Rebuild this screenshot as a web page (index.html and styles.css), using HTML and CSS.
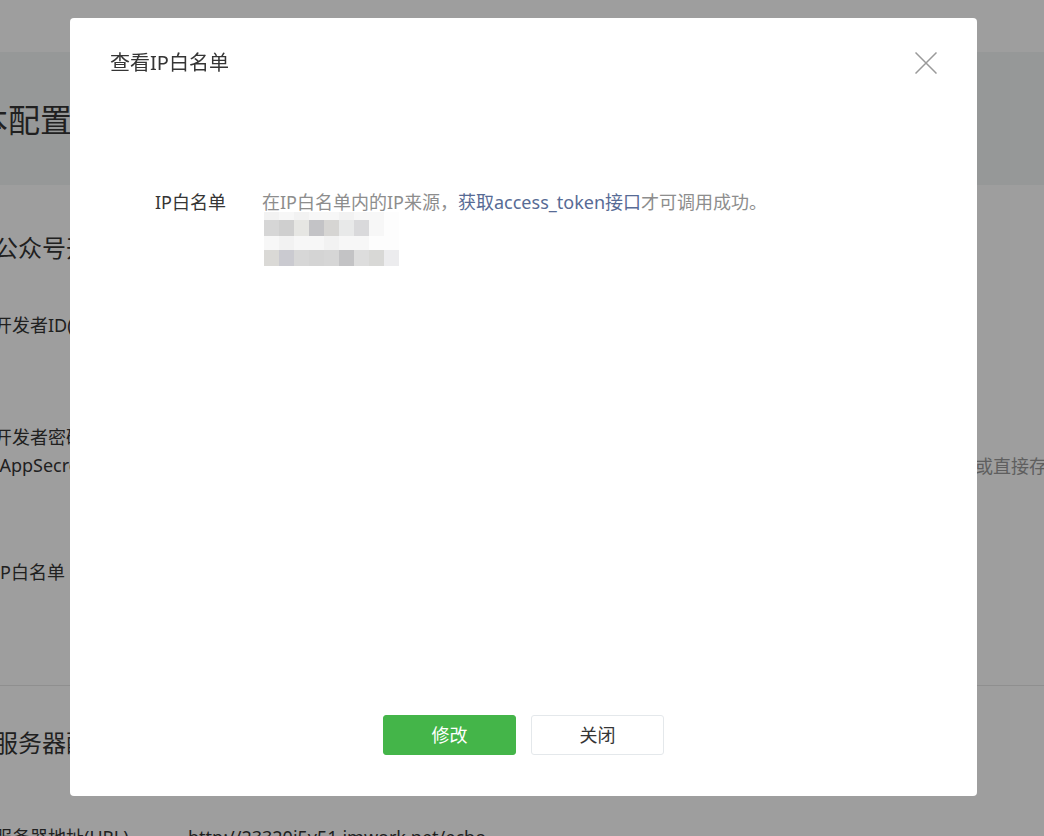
FILE: index.html
```html
<!DOCTYPE html>
<html lang="zh-CN">
<head>
<meta charset="utf-8">
<title>基本配置</title>
<link rel="stylesheet" href="styles.css">
</head>
<body>
<div class="page">
  <header class="topbar"></header>
  <section class="band">
    <div class="wrap"><h1 class="page-title">基本配置</h1></div>
  </section>
  <div class="main-outer">
    <main class="main">
      <section class="panel">
        <h2 class="panel-title">公众号开发信息</h2>
        <div class="row">
          <div class="label">开发者ID(AppID)</div>
          <div class="value">wx8d2c4f1e6a7b3c90</div>
        </div>
        <div class="row">
          <div class="label">开发者密码(AppSecret)</div>
          <div class="value value-secret">已启用</div>
          <div class="tips">或直接存储在代码中</div>
        </div>
        <div class="row row-ip">
          <div class="label">IP白名单</div>
          <div class="value">查看</div>
        </div>
      </section>
      <section class="panel panel-server">
        <h2 class="panel-title">服务器配置</h2>
        <div class="row row-url">
          <div class="label">服务器地址(URL)</div>
          <div class="value">http://23320i5y51.imwork.net/echo</div>
        </div>
      </section>
    </main>
  </div>
</div>

<div class="mask"></div>

<div class="dialog">
  <div class="dialog-hd">
    <h3 class="dialog-title">查看IP白名单</h3>
    <span class="dialog-close">
      <svg width="22" height="22" viewBox="0 0 22 22"><path d="M0.5 0.5 L21.5 21.5 M21.5 0.5 L0.5 21.5" stroke="#9a9a9a" stroke-width="1.5" fill="none"/></svg>
    </span>
  </div>
  <div class="dialog-bd">
    <div class="form-row">
      <div class="form-label">IP白名单</div>
      <div class="form-value">
        <p class="desc">在IP白名单内的IP来源，<span class="link">获取access_token接口</span>才可调用成功。</p>
        <div class="mosaic">
          <div class="mrow r1"><span class="m q2"></span><span class="m q1"></span><span class="m q2"></span><span class="m q1"></span><span class="m q1"></span><span class="m q2"></span><span class="m q1"></span><span class="m q1"></span><span class="m q0"></span></div>
          <div class="mrow r2"><span class="m a1"></span><span class="m a2"></span><span class="m a3"></span><span class="m a4"></span><span class="m a5"></span><span class="m a6"></span><span class="m a7"></span><span class="m q1"></span><span class="m q0"></span></div>
          <div class="mrow r3"><span class="m q1"></span><span class="m q2"></span><span class="m q1"></span><span class="m q1"></span><span class="m q2"></span><span class="m q1"></span><span class="m q1"></span><span class="m q0"></span><span class="m q0"></span></div>
          <div class="mrow r4"><span class="m b1"></span><span class="m b2"></span><span class="m b3"></span><span class="m b4"></span><span class="m b5"></span><span class="m b6"></span><span class="m b7"></span><span class="m b8"></span><span class="m b9"></span></div>
        </div>
      </div>
    </div>
  </div>
  <div class="dialog-ft">
    <button class="btn btn-primary">修改</button>
    <button class="btn btn-default">关闭</button>
  </div>
</div>
</body>
</html>
```

FILE: styles.css
```css
* { box-sizing: border-box; }
html, body { margin: 0; padding: 0; }
body {
  width: 1044px;
  height: 836px;
  overflow: hidden;
  background: #fff;
  font-family: "Noto Sans", "Noto Sans CJK SC", sans-serif;
  font-size: 18px;
  color: #353535;
}

/* ---------- page behind the dialog ---------- */
.topbar { height: 52px; background: #fff; }

.band {
  height: 133px;
  background: #f3f5f5;
  display: flex;
  justify-content: center;
}
.wrap { width: 1156px; flex-shrink: 0; padding-top: 48px; }
.page-title {
  margin: 0;
  font-size: 32px;
  font-weight: 400;
  line-height: 40px;
  color: #353535;
}

.main-outer { display: flex; justify-content: center; }
.main { width: 1156px; flex-shrink: 0; padding: 0 50px; }

.panel { padding: 48px 0 57px; }
.panel-title {
  margin: 0 0 6px;
  font-size: 24px;
  font-weight: 400;
  line-height: 30px;
}
.row {
  display: flex;
  padding: 42px 0;
  line-height: 28px;
}
.row-ip { padding-top: 37px; }
.label { width: 170px; margin-right: 24px; flex-shrink: 0; }
.value { flex-shrink: 0; }
.value-secret { width: 787px; }
.tips { padding-top: 30px; line-height: 26px; color: #9a9a9a; white-space: nowrap; }

.panel-server { border-top: 1px solid #e7e7e7; padding-top: 42px; }
.panel-server .panel-title { margin-bottom: 23px; }
.row-url { padding-top: 42px; }

/* ---------- mask & dialog ---------- */
.mask {
  position: fixed;
  inset: 0;
  background: rgba(0, 0, 0, 0.38);
}
.dialog {
  position: fixed;
  left: 70px;
  top: 18px;
  width: 907px;
  height: 778px;
  background: #fff;
  border-radius: 4px;
  display: flex;
  flex-direction: column;
}
.dialog-hd {
  position: relative;
  height: 90px;
  padding: 0 40px;
}
.dialog-title {
  margin: 0;
  font-size: 20px;
  font-weight: 400;
  line-height: 90px;
  color: #353535;
}
.dialog-close {
  position: absolute;
  top: 34px;
  right: 40px;
  width: 22px;
  height: 22px;
}
.dialog-close svg { display: block; }

.dialog-bd { flex: 1; padding: 84px 40px 0; }
.form-row { display: flex; }
.form-label {
  width: 152px;
  padding-right: 36px;
  text-align: right;
  line-height: 20px;
  color: #353535;
  flex-shrink: 0;
}
.form-value { flex: 1; }
.desc { margin: 0; line-height: 20px; color: #8d8d8d; }
.link { color: #576b95; }

.mosaic { padding-left: 2px; }
.mrow { display: flex; }
.r1 { height: 8px; }
.r2 { height: 16px; }
.r3 { height: 14px; }
.r4 { height: 16px; }
.m { width: 15px; height: 100%; }
.q0 { background: #fdfdfd; }
.q1 { background: #f7f7f7; }
.q2 { background: #f2f2f2; }
.a1 { background: #d6d6d6; }
.a2 { background: #cfcfcf; }
.a3 { background: #e6e6e3; }
.a4 { background: #c3c3c6; }
.a5 { background: #d6d5d3; }
.a6 { background: #e8e9e9; }
.a7 { background: #d9d9db; }
.b1 { background: #dad9d6; }
.b2 { background: #cacad0; }
.b3 { background: #d7d7d7; }
.b4 { background: #d4d4d4; }
.b5 { background: #d6d6d6; }
.b6 { background: #c3c3c5; }
.b7 { background: #dddddd; }
.b8 { background: #d8d8d6; }
.b9 { background: #ececee; }

.dialog-ft {
  display: flex;
  justify-content: center;
  gap: 15px;
  padding-bottom: 41px;
}
.btn {
  width: 133px;
  height: 40px;
  border-radius: 3px;
  font-family: inherit;
  font-size: 18px;
  line-height: 38px;
  padding: 0;
  cursor: pointer;
}
.btn-primary { background: #44b549; border: 1px solid #44b549; color: #fff; }
.btn-default { background: #fff; border: 1px solid #e4e8eb; color: #353535; }
```
